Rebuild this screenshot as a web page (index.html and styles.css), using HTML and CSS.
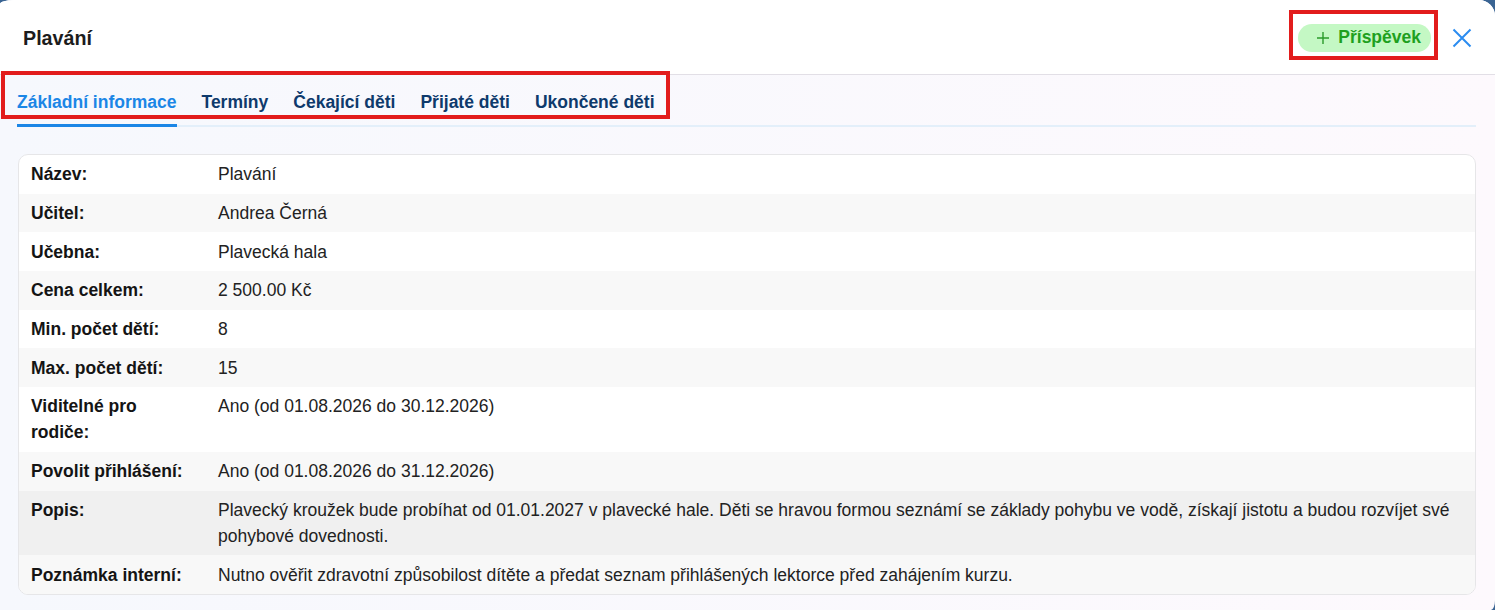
FILE: index.html
```html
<!DOCTYPE html>
<html lang="cs">
<head>
  <meta charset="UTF-8">
  <meta name="viewport" content="width=device-width, initial-scale=1.0">
  <title>Plavání</title>
  <link rel="stylesheet" href="styles.css">
</head>
<body>
  <div class="modal">
    <div class="modal-header">
      <h2 class="modal-title">Plavání</h2>
      <div class="header-actions">
        <button class="btn-contribution" type="button">
          <svg width="14" height="14" viewBox="0 0 14 14" aria-hidden="true">
            <path d="M7 1v12M1 7h12" stroke="currentColor" stroke-width="1.4" fill="none"/>
          </svg>
          Příspěvek
        </button>
        <button class="btn-close" type="button" aria-label="Zavřít">
          <svg width="20" height="20" viewBox="0 0 20 20">
            <path d="M1.5 1.5l17 17M18.5 1.5l-17 17" stroke="currentColor" stroke-width="2" fill="none"/>
          </svg>
        </button>
      </div>
    </div>

    <div class="modal-body">
      <nav class="tabs">
        <a class="tab active">Základní informace</a>
        <a class="tab">Termíny</a>
        <a class="tab">Čekající děti</a>
        <a class="tab">Přijaté děti</a>
        <a class="tab">Ukončené děti</a>
      </nav>

      <div class="info-card">
        <div class="info-row"><div class="info-label">Název:</div><div class="info-value">Plavání</div></div>
        <div class="info-row"><div class="info-label">Učitel:</div><div class="info-value">Andrea Černá</div></div>
        <div class="info-row"><div class="info-label">Učebna:</div><div class="info-value">Plavecká hala</div></div>
        <div class="info-row"><div class="info-label">Cena celkem:</div><div class="info-value">2 500.00 Kč</div></div>
        <div class="info-row"><div class="info-label">Min. počet dětí:</div><div class="info-value">8</div></div>
        <div class="info-row"><div class="info-label">Max. počet dětí:</div><div class="info-value">15</div></div>
        <div class="info-row"><div class="info-label">Viditelné pro rodiče:</div><div class="info-value">Ano (od 01.08.2026 do 30.12.2026)</div></div>
        <div class="info-row"><div class="info-label">Povolit přihlášení:</div><div class="info-value">Ano (od 01.08.2026 do 31.12.2026)</div></div>
        <div class="info-row hovered"><div class="info-label">Popis:</div><div class="info-value">Plavecký kroužek bude probíhat od 01.01.2027 v plavecké hale. Děti se hravou formou seznámí se základy pohybu ve vodě, získají jistotu a budou rozvíjet své pohybové dovednosti.</div></div>
        <div class="info-row"><div class="info-label">Poznámka interní:</div><div class="info-value">Nutno ověřit zdravotní způsobilost dítěte a předat seznam přihlášených lektorce před zahájením kurzu.</div></div>
      </div>
    </div>

    <!-- red highlight frames -->
    <div class="mark mark-tabs"></div>
    <div class="mark mark-button"></div>
  </div>
</body>
</html>
```

FILE: styles.css
```css
html, body { margin: 0; height: 100%; overflow: hidden; }
body { background: #3a6493; font-family: "Liberation Sans", Arial, sans-serif; color: #222; }

.modal { position: relative; height: 610px; background: linear-gradient(90deg, #f6f8fd, #fdf9fd); border-radius: 14px 16px 4px 0 / 4px 16px 10px 0; overflow: hidden; }

.modal-header { height: 74px; display: flex; align-items: center; justify-content: space-between; padding: 0 23px; background: #fff; border-bottom: 1px solid #e2dfe6; }
.modal-title { margin: 2px 0 0; font-size: 19.7px; font-weight: bold; color: #1c1c1c; }
.header-actions { display: flex; align-items: center; gap: 21px; margin-top: 1px; }

.btn-contribution { display: flex; align-items: center; gap: 8px; height: 28px; padding: 0 10px 0 18px; border: none; border-radius: 14px; background: #c4f8c4; color: #1ea01e; font-family: inherit; font-size: 17.5px; font-weight: bold; cursor: pointer; }
.btn-contribution svg { color: #2a9a2a; }
.btn-close { display: flex; padding: 0; border: none; background: none; color: #2b8cf0; cursor: pointer; }

.modal-body { padding: 0 19px 0 18px; }

.tabs { display: flex; gap: 25px; margin-top: 4px; border-bottom: 2px solid #e3effa; }
.tab { padding: 12px 0 11px; line-height: 22px; font-size: 17.5px; font-weight: bold; color: #0e3a6c; border-bottom: 3px solid transparent; margin-bottom: -2px; cursor: pointer; }
.tab:first-child { margin-left: -1px; }
.tab.active { color: #1b86e6; border-bottom-color: #1b86e6; }

.info-card { margin-top: 27px; background: #fff; border: 1px solid #e6e6e8; border-radius: 10px; overflow: hidden; }
.info-row { display: flex; font-size: 17.5px; line-height: 26px; }
.info-row:nth-child(even) { background: #f8f8f8; }
.info-row.hovered { background: #f0f0f0; }
.info-label { flex: 0 0 160px; padding: 6.35px 27px 6.35px 12px; font-weight: bold; color: #141414; }
.info-value { flex: 1; padding: 6.35px 24px 6.35px 0; color: #222; }

.mark { position: absolute; border: 4px solid #e21c1c; pointer-events: none; }
.mark-tabs { left: 1px; top: 71px; width: 661px; height: 40px; }
.mark-button { left: 1289px; top: 10px; width: 141px; height: 42px; }
```
